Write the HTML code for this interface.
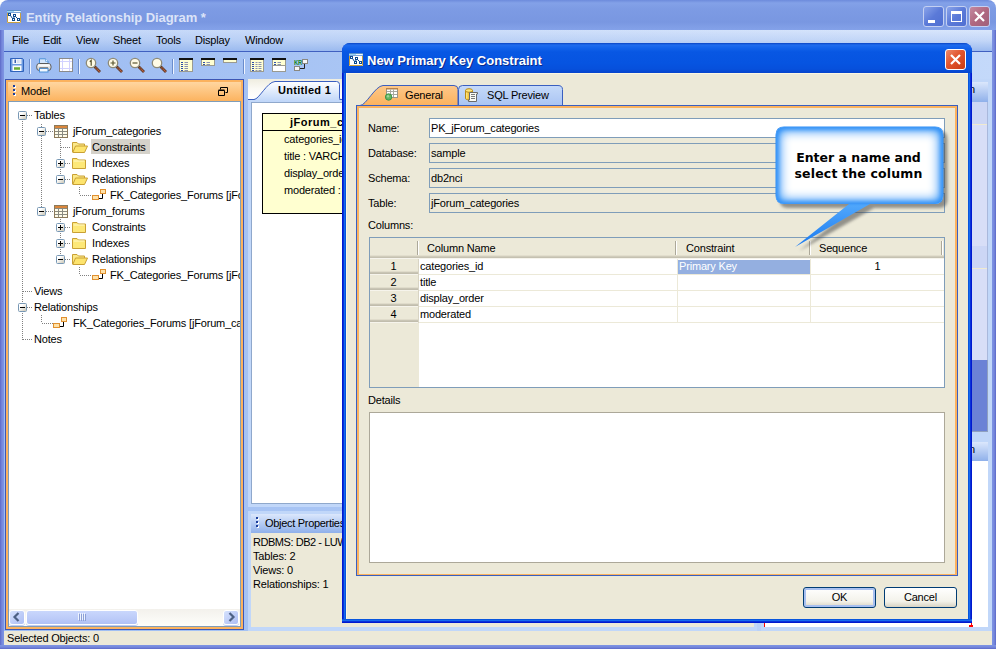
<!DOCTYPE html>
<html>
<head>
<meta charset="utf-8">
<title>Entity Relationship Diagram</title>
<style>
*{box-sizing:border-box;margin:0;padding:0}
html,body{width:996px;height:649px;overflow:hidden;background:#a9c5f4}
body{background:linear-gradient(90deg,#9dbcf2 0,#a9c5f4 35%,#c4d9fa 100%)}
body{position:relative;font-family:"Liberation Sans",sans-serif;font-size:11px;color:#000;line-height:14px;letter-spacing:-.18px}
div,span,svg{position:absolute}
.t{white-space:pre;line-height:14px;height:14px}
.b{font-weight:bold}
#wtitle{left:0;top:0;width:996px;height:30px;border-radius:8px 8px 0 0;background:linear-gradient(180deg,#6d8bdc 0,#83a1e8 3px,#7d9be4 9px,#7997e1 22px,#84a2e9 30px)}
.cap{letter-spacing:0;font-size:13px;font-weight:bold;line-height:16px;white-space:pre}
.wb{background:#7688dc}
#menubar{left:4px;top:30px;width:988px;height:21px;background:linear-gradient(180deg,rgba(155,186,239,0) 0,rgba(155,186,239,.35) 50%,rgba(155,186,239,1) 100%),linear-gradient(90deg,#c3d7f8,#d9e6fc)}
#toolbar{left:4px;top:52px;width:988px;height:27px}
.sep{width:2px;height:15px;top:59px;border-left:1px solid #6a8ccc;border-right:1px solid #eef4ff}
.face{background:#ece9d8}
.hl{height:1px;background-image:linear-gradient(90deg,#808080 50%,transparent 50%);background-size:2px 1px}
.vl{width:1px;background-image:linear-gradient(180deg,#808080 50%,transparent 50%);background-size:1px 2px}
.ex{width:9px;height:9px;border:1px solid #7898b5;border-radius:1.500px;background:linear-gradient(135deg,#fff 30%,#c9c5b4 100%)}
.ex i{position:absolute;left:1px;top:3px;width:5px;height:1px;background:#000}
.ex b{position:absolute;left:3px;top:1px;width:1px;height:5px;background:#000}
.fld{left:429px;width:516px;height:20px;border:1px solid #7f9db9;background:#ece9d8}
.fld span{left:1px;top:2px}
.btn{width:73px;height:21px;border:1px solid #003c74;border-radius:3px;background:linear-gradient(180deg,#fff 0,#f3f2ea 70%,#d8d3c3 100%);text-align:center;line-height:19px}
.cb{width:21px;height:21px;border:1px solid #fff;border-radius:3px}
</style>
</head>
<body>
<div class="" style="left:0px;top:0px;width:996px;height:10px;background:#fff"></div>
<div id="wtitle"></div>
<div class="" style="left:0px;top:30px;width:4px;height:619px;background:linear-gradient(90deg,#5a66c6 0,#6a7bd4 1px,#7688dc 2px,#7e95e4 4px)"></div>
<div class="" style="left:992px;top:30px;width:4px;height:619px;background:linear-gradient(270deg,#5a66c6 0,#6a7bd4 1px,#7688dc 2px,#7e95e4 4px)"></div>
<div class="" style="left:0px;top:645px;width:996px;height:4px;background:linear-gradient(0deg,#5a66c6 0,#6a7bd4 1px,#7688dc 2px,#7e95e4 4px)"></div>
<svg style="left:7px;top:10px" width="14" height="13" viewBox="0 0 14 13"><rect x="0" y="0" width="14" height="13" fill="#fff"/><rect x="0" y="0" width="14" height="1" fill="#5a90c8"/><rect x="0" y="1" width="14" height="1" fill="#9ad4f4"/><rect x="7" y="1" width="6.500" height="1" fill="#eef8fd"/><rect x="0" y="2" width="14" height="1" fill="#7aa6d8"/><path d="M.5 3V12.500H13.500V3" stroke="#c8a040" fill="none"/><path d="M3.500 5.500L5.500 8.500M8.500 6.500L10.500 8.500M7 7L6.500 9" stroke="#0a4a90" fill="none"/><g fill="#fff" stroke="#0a4a90"><rect x="1.500" y="3.500" width="2" height="2"/><rect x="6.500" y="4.500" width="2" height="2"/><rect x="5.500" y="8.500" width="2" height="2"/><rect x="10.500" y="8.500" width="2" height="2"/></g></svg>
<span class="cap" style="left:26px;top:10px;color:#dce4f8;letter-spacing:-.08px">Entity Relationship Diagram *</span>
<div class="cb" style="left:923px;top:6px;background:linear-gradient(135deg,#8aa4ea 0,#5b7ad8 50%,#4f6fd2 100%);border-color:#c4d0f2"><div style="left:4px;top:13px;width:7px;height:3px;background:#fff"></div></div>
<div class="cb" style="left:946px;top:6px;background:linear-gradient(135deg,#8aa4ea 0,#5b7ad8 50%,#4f6fd2 100%);border-color:#c4d0f2"><div style="left:4px;top:4px;width:11px;height:11px;border:1px solid #fff;border-top-width:3px"></div></div>
<div class="cb" style="left:969px;top:6px;background:linear-gradient(135deg,#c489a0 0,#b06880 50%,#a0607a 100%);border-color:#c4d0f2"><svg style="left:0;top:0" width="19" height="19"><path d="M5 5L14 14M14 5L5 14" stroke="#fff" stroke-width="2.2" fill="none"/></svg></div>
<div id="menubar"></div>
<span class="t " style="left:12px;top:33px;">File</span>
<span class="t " style="left:43px;top:33px;">Edit</span>
<span class="t " style="left:76px;top:33px;">View</span>
<span class="t " style="left:113px;top:33px;">Sheet</span>
<span class="t " style="left:156px;top:33px;">Tools</span>
<span class="t " style="left:195px;top:33px;">Display</span>
<span class="t " style="left:245px;top:33px;">Window</span>
<div class="" style="left:4px;top:51px;width:988px;height:1px;background:#4060c0"></div>
<div id="toolbar"></div>
<svg style="left:10px;top:58px" width="15" height="14" viewBox="0 0 15 14"><path d="M.5 .5H12.500L13.500 1.500V13.500H.5Z" fill="#6d9be0" stroke="#2f62bc"/><rect x="2.500" y="1" width="9" height="5" fill="#f4f7fc"/><rect x="4.500" y="1.500" width="1.500" height="3.500" fill="#3a62b0"/><rect x="7.500" y="1.500" width="1" height="3.500" fill="#c4cfe4"/><rect x="9.500" y="1.500" width="1" height="3.500" fill="#d4dcec"/><rect x="2.500" y="7.500" width="9" height="5.500" fill="#fbfcfe"/><rect x="4" y="9" width="6" height="3" fill="#8cc45a"/><rect x="4" y="10" width="6" height="1" fill="#6aa83c"/></svg>
<div class="sep" style="left:29px"></div>
<div class="sep" style="left:78px"></div>
<div class="sep" style="left:172px"></div>
<div class="sep" style="left:243px"></div>
<svg style="left:36px;top:58px" width="16" height="15" viewBox="0 0 16 15"><path d="M3.500 6V.8H9.500L12 3.300V6" fill="#d4e6fb" stroke="#4a90d8"/><path d="M9.500 .8V3.300H12" fill="#fff" stroke="#4a90d8" stroke-width=".7"/><rect x=".7" y="5.500" width="14.300" height="7" rx="2.800" fill="#dedede" stroke="#5a5a5a"/><rect x="1.800" y="6.300" width="12.200" height="2.200" rx="1.100" fill="#fafafa"/><rect x="3.500" y="10.500" width="8.500" height="3.500" fill="#f2f8fe" stroke="#4a90d8"/><rect x="3.500" y="9" width="8.500" height="1.200" fill="#8a8a8a"/></svg>
<svg style="left:59px;top:58px" width="14" height="14" viewBox="0 0 14 14"><rect x=".5" y=".5" width="13" height="13" fill="#fff" stroke="#8a8a8a"/><path d="M1 3.500H13M1 10.500H13M3.500 1V13M10.500 1V13" stroke="#d2d2ff" fill="none"/></svg>
<svg style="left:85px;top:57px" width="17" height="17" viewBox="0 0 17 17"><path d="M9.500 9.500L15 15" stroke="#5a3a2a" stroke-width="2.800"/><path d="M10.500 10.500L14.800 14.800" stroke="#c0603a" stroke-width="1.400" stroke-dasharray="1.200 .6"/><circle cx="6" cy="6" r="4.700" fill="#fffbe6" stroke="#8d8a78" stroke-width="1.300"/><path d="M4.800 4.800L6.200 3.500V8.800" stroke="#5a5630" stroke-width="1.200" fill="none"/></svg>
<svg style="left:107px;top:57px" width="17" height="17" viewBox="0 0 17 17"><path d="M9.500 9.500L15 15" stroke="#5a3a2a" stroke-width="2.800"/><path d="M10.500 10.500L14.800 14.800" stroke="#c0603a" stroke-width="1.400" stroke-dasharray="1.200 .6"/><circle cx="6" cy="6" r="4.700" fill="#fffbe6" stroke="#8d8a78" stroke-width="1.300"/><path d="M3.500 6H8.500M6 3.500V8.500" stroke="#5a5630" stroke-width="1.200" fill="none"/></svg>
<svg style="left:129px;top:57px" width="17" height="17" viewBox="0 0 17 17"><path d="M9.500 9.500L15 15" stroke="#5a3a2a" stroke-width="2.800"/><path d="M10.500 10.500L14.800 14.800" stroke="#c0603a" stroke-width="1.400" stroke-dasharray="1.200 .6"/><circle cx="6" cy="6" r="4.700" fill="#fffbe6" stroke="#8d8a78" stroke-width="1.300"/><path d="M3.500 6H8.500" stroke="#5a5630" stroke-width="1.200" fill="none"/></svg>
<svg style="left:151px;top:57px" width="17" height="17" viewBox="0 0 17 17"><path d="M9.500 9.500L15 15" stroke="#5a3a2a" stroke-width="2.800"/><path d="M10.500 10.500L14.800 14.800" stroke="#c0603a" stroke-width="1.400" stroke-dasharray="1.200 .6"/><circle cx="6" cy="6" r="4.700" fill="#fffbe6" stroke="#8d8a78" stroke-width="1.300"/></svg>
<svg style="left:179px;top:58px" width="14" height="14" viewBox="0 0 14 14"><rect x=".5" y="1.500" width="13" height="12" fill="#ffffd2" stroke="#9a9a90"/><rect x="0" y="0" width="14" height="2" fill="#111"/><path d="M2 4.5H4" stroke="#2d4fa8"/><path d="M5.500 4.5H9" stroke="#8a93b0"/><path d="M2 6.5H4" stroke="#2d4fa8"/><path d="M5.500 6.5H9" stroke="#8a93b0"/><path d="M2 8.5H4" stroke="#2d4fa8"/><path d="M5.500 8.5H9" stroke="#8a93b0"/><path d="M2 10.5H4" stroke="#2d4fa8"/><path d="M5.500 10.5H9" stroke="#8a93b0"/><path d="M2 12.5H4" stroke="#2d4fa8"/><path d="M5.500 12.5H9" stroke="#8a93b0"/></svg>
<svg style="left:201px;top:58px" width="14" height="8" viewBox="0 0 14 8"><rect x=".5" y="1.500" width="13" height="6" fill="#ffffd2" stroke="#9a9a90"/><rect x="0" y="0" width="14" height="2" fill="#111"/><path d="M2 4.5H4" stroke="#2d4fa8"/><path d="M5.500 4.5H9" stroke="#8a93b0"/><path d="M2 6.5H4" stroke="#2d4fa8"/><path d="M5.500 6.5H9" stroke="#8a93b0"/></svg>
<svg style="left:223px;top:58px" width="14" height="5" viewBox="0 0 14 5"><rect x=".5" y="1.500" width="13" height="3" fill="#ffffd2" stroke="#9a9a90"/><rect x="0" y="0" width="14" height="2" fill="#111"/></svg>
<svg style="left:250px;top:58px" width="14" height="14" viewBox="0 0 14 14"><rect x=".5" y="1.500" width="13" height="12" fill="#ffffd2" stroke="#9a9a90"/><rect x="0" y="0" width="14" height="2" fill="#111"/><path d="M2 4.5H4" stroke="#2d4fa8"/><path d="M5.500 4.5H7.5" stroke="#8a93b0"/><path d="M8.500 4.5H11.500" stroke="#8a93b0"/><path d="M2 6.5H4" stroke="#2d4fa8"/><path d="M5.500 6.5H7.5" stroke="#8a93b0"/><path d="M8.500 6.5H11.500" stroke="#8a93b0"/><path d="M2 8.5H4" stroke="#2d4fa8"/><path d="M5.500 8.5H7.5" stroke="#8a93b0"/><path d="M8.500 8.5H11.500" stroke="#8a93b0"/><path d="M2 10.5H4" stroke="#2d4fa8"/><path d="M5.500 10.5H7.5" stroke="#8a93b0"/><path d="M8.500 10.5H11.500" stroke="#8a93b0"/><path d="M2 12.5H4" stroke="#2d4fa8"/><path d="M5.500 12.5H7.5" stroke="#8a93b0"/><path d="M8.500 12.5H11.500" stroke="#8a93b0"/></svg>
<svg style="left:272px;top:58px" width="14" height="14" viewBox="0 0 14 14"><rect x=".5" y="1.500" width="13" height="12" fill="#ffffd2" stroke="#9a9a90"/><rect x="0" y="0" width="14" height="2" fill="#111"/><rect x="1" y="8" width="12" height="5" fill="#fff"/><path d="M.5 7.500H13.500" stroke="#9a9a90"/><path d="M2 4.5H4" stroke="#2d4fa8"/><path d="M5.500 4.5H9" stroke="#8a93b0"/><path d="M2 6.5H4" stroke="#2d4fa8"/><path d="M5.500 6.5H9" stroke="#8a93b0"/></svg>
<svg style="left:294px;top:59px" width="15" height="12" viewBox="0 0 15 12"><path d="M6 9.500H10.500V4.500" stroke="#222" fill="none"/><rect x="8.500" y=".5" width="5" height="4" fill="#f6f6f6" stroke="#8a8880"/><rect x=".5" y="7.500" width="5" height="4" fill="#f6f6f6" stroke="#8a8880"/><text x="0" y="6" font-family="Liberation Sans,sans-serif" font-size="6.500" font-weight="bold" fill="#1e8a1e" textLength="8" lengthAdjust="spacingAndGlyphs">KR</text></svg>
<div class="face" style="left:4px;top:631px;width:988px;height:14px;"></div>
<span class="t " style="left:7px;top:631px;">Selected Objects: 0</span>
<div class="" style="left:5px;top:79px;width:239px;height:551px;background:#fbb25e;border:1px solid #3d56b4"></div>
<div class="" style="left:8px;top:82px;width:233px;height:19px;background:linear-gradient(180deg,#ffd6a0 0,#fcb35f 100%)"></div>
<div class="" style="left:14px;top:86px;width:2px;height:2px;background:#fff"></div>
<div class="" style="left:13px;top:85px;width:2px;height:2px;background:#1c3f9c"></div>
<div class="" style="left:14px;top:90px;width:2px;height:2px;background:#fff"></div>
<div class="" style="left:13px;top:89px;width:2px;height:2px;background:#1c3f9c"></div>
<div class="" style="left:14px;top:94px;width:2px;height:2px;background:#fff"></div>
<div class="" style="left:13px;top:93px;width:2px;height:2px;background:#1c3f9c"></div>
<span class="t " style="left:21px;top:84px;">Model</span>
<svg style="left:218px;top:87px" width="10" height="9"><path d="M2.500 2.500V.5H9.500V5.500H7.500M.5 3.500H6.500V8.500H.5Z" fill="none" stroke="#000"/><path d="M.5 3H6.500" stroke="#000"/></svg>
<div class="" style="left:8px;top:101px;width:233px;height:526px;background:#fff;border:1px solid #7f9db9"></div>
<div style="left:8px;top:101px;width:232px;height:508px;overflow:hidden">
<span class="t" style="left:26px;top:7px">Tables</span>
<span class="t" style="left:65px;top:23px">jForum_categories</span>
<div style="left:83px;top:38px;width:59px;height:15px;background:#d5d2ca"></div>
<span class="t" style="left:84px;top:39px">Constraints</span>
<span class="t" style="left:84px;top:55px">Indexes</span>
<span class="t" style="left:84px;top:71px">Relationships</span>
<span class="t" style="left:102px;top:87px">FK_Categories_Forums [jForum_categories.categories_id]</span>
<span class="t" style="left:65px;top:103px">jForum_forums</span>
<span class="t" style="left:84px;top:119px">Constraints</span>
<span class="t" style="left:84px;top:135px">Indexes</span>
<span class="t" style="left:84px;top:151px">Relationships</span>
<span class="t" style="left:102px;top:167px">FK_Categories_Forums [jForum_categories.categories_id]</span>
<span class="t" style="left:26px;top:183px">Views</span>
<span class="t" style="left:26px;top:199px">Relationships</span>
<span class="t" style="left:65px;top:215px">FK_Categories_Forums [jForum_categories.categories_id]</span>
<span class="t" style="left:26px;top:231px">Notes</span>
</div>
<div class="vl" style="left:22px;top:121px;width:1px;height:219px;"></div>
<div class="hl" style="left:27px;top:115px;width:6px;height:1px;"></div>
<div class="hl" style="left:23px;top:291px;width:10px;height:1px;"></div>
<div class="hl" style="left:27px;top:307px;width:6px;height:1px;"></div>
<div class="hl" style="left:23px;top:339px;width:10px;height:1px;"></div>
<div class="vl" style="left:41px;top:124px;width:1px;height:83px;"></div>
<div class="hl" style="left:46px;top:131px;width:7px;height:1px;"></div>
<div class="hl" style="left:46px;top:211px;width:7px;height:1px;"></div>
<div class="vl" style="left:60px;top:139px;width:1px;height:36px;"></div>
<div class="hl" style="left:61px;top:147px;width:10px;height:1px;"></div>
<div class="hl" style="left:65px;top:163px;width:6px;height:1px;"></div>
<div class="hl" style="left:65px;top:179px;width:6px;height:1px;"></div>
<div class="vl" style="left:79px;top:187px;width:1px;height:8px;"></div>
<div class="hl" style="left:80px;top:195px;width:11px;height:1px;"></div>
<div class="vl" style="left:60px;top:219px;width:1px;height:36px;"></div>
<div class="hl" style="left:65px;top:227px;width:6px;height:1px;"></div>
<div class="hl" style="left:65px;top:243px;width:6px;height:1px;"></div>
<div class="hl" style="left:65px;top:259px;width:6px;height:1px;"></div>
<div class="vl" style="left:79px;top:267px;width:1px;height:8px;"></div>
<div class="hl" style="left:80px;top:275px;width:11px;height:1px;"></div>
<div class="vl" style="left:41px;top:315px;width:1px;height:8px;"></div>
<div class="hl" style="left:42px;top:323px;width:11px;height:1px;"></div>
<div class="ex" style="left:18px;top:111px"><i></i></div>
<div class="ex" style="left:37px;top:127px"><i></i></div>
<div class="ex" style="left:56px;top:159px"><i></i><b></b></div>
<div class="ex" style="left:56px;top:175px"><i></i></div>
<div class="ex" style="left:37px;top:207px"><i></i></div>
<div class="ex" style="left:56px;top:223px"><i></i><b></b></div>
<div class="ex" style="left:56px;top:239px"><i></i><b></b></div>
<div class="ex" style="left:56px;top:255px"><i></i></div>
<div class="ex" style="left:18px;top:303px"><i></i></div>
<svg style="left:54px;top:125px" width="14" height="13" viewBox="0 0 14 13"><rect x=".5" y=".5" width="13" height="12" fill="#fffbe8" stroke="#8c7a5a"/><rect x="1" y="1" width="12" height="2.500" fill="#d9853b"/><path d="M1 3.500H13M1 6.500H13M1 9.500H13M4.500 3V12M8.500 3V12" stroke="#8a8a80" fill="none"/></svg>
<svg style="left:54px;top:205px" width="14" height="13" viewBox="0 0 14 13"><rect x=".5" y=".5" width="13" height="12" fill="#fffbe8" stroke="#8c7a5a"/><rect x="1" y="1" width="12" height="2.500" fill="#d9853b"/><path d="M1 3.500H13M1 6.500H13M1 9.500H13M4.500 3V12M8.500 3V12" stroke="#8a8a80" fill="none"/></svg>
<svg style="left:72px;top:141px" width="16" height="12" viewBox="0 0 16 12"><path d="M.5 11V1.500H5L6.500 3H12.500V5" fill="#fbe98a" stroke="#c9a034"/><path d="M.8 11.500L3.500 5H15.500L12.500 11.500Z" fill="#fde46e" stroke="#c9a034"/></svg>
<svg style="left:72px;top:157px" width="15" height="12" viewBox="0 0 15 12"><path d="M.5 11.500V1.500H5L6.500 3H13.500V11.500Z" fill="#fde878" stroke="#c9a034"/><path d="M1.500 4H12.500" stroke="#fff8c8"/></svg>
<svg style="left:72px;top:173px" width="16" height="12" viewBox="0 0 16 12"><path d="M.5 11V1.500H5L6.500 3H12.500V5" fill="#fbe98a" stroke="#c9a034"/><path d="M.8 11.500L3.500 5H15.500L12.500 11.500Z" fill="#fde46e" stroke="#c9a034"/></svg>
<svg style="left:72px;top:221px" width="15" height="12" viewBox="0 0 15 12"><path d="M.5 11.500V1.500H5L6.500 3H13.500V11.500Z" fill="#fde878" stroke="#c9a034"/><path d="M1.500 4H12.500" stroke="#fff8c8"/></svg>
<svg style="left:72px;top:237px" width="15" height="12" viewBox="0 0 15 12"><path d="M.5 11.500V1.500H5L6.500 3H13.500V11.500Z" fill="#fde878" stroke="#c9a034"/><path d="M1.500 4H12.500" stroke="#fff8c8"/></svg>
<svg style="left:72px;top:253px" width="16" height="12" viewBox="0 0 16 12"><path d="M.5 11V1.500H5L6.500 3H12.500V5" fill="#fbe98a" stroke="#c9a034"/><path d="M.8 11.500L3.500 5H15.500L12.500 11.500Z" fill="#fde46e" stroke="#c9a034"/></svg>
<svg style="left:92px;top:189px" width="15" height="12" viewBox="0 0 15 12"><path d="M7 9.500H10.500V4" stroke="#000" fill="none"/><rect x="8.500" y=".5" width="5" height="4" fill="#ffe2a8" stroke="#e09030"/><rect x=".5" y="6.500" width="6" height="4" fill="#ffe2a8" stroke="#e09030"/></svg>
<svg style="left:92px;top:269px" width="15" height="12" viewBox="0 0 15 12"><path d="M7 9.500H10.500V4" stroke="#000" fill="none"/><rect x="8.500" y=".5" width="5" height="4" fill="#ffe2a8" stroke="#e09030"/><rect x=".5" y="6.500" width="6" height="4" fill="#ffe2a8" stroke="#e09030"/></svg>
<svg style="left:53px;top:317px" width="15" height="12" viewBox="0 0 15 12"><path d="M7 9.500H10.500V4" stroke="#000" fill="none"/><rect x="8.500" y=".5" width="5" height="4" fill="#ffe2a8" stroke="#e09030"/><rect x=".5" y="6.500" width="6" height="4" fill="#ffe2a8" stroke="#e09030"/></svg>
<div class="" style="left:9px;top:609px;width:231px;height:17px;background:linear-gradient(180deg,#f3f1ec 0,#fefefb 100%)"></div>
<div style="left:9px;top:610px;width:16px;height:15px;border:1px solid #fff;border-radius:3px;background:linear-gradient(135deg,#d6e2fd 0,#bccbf7 60%,#aebff5 100%);box-shadow:0 1px 0 #c0cdf0"><svg style="left:-1px;top:-1px" width="16" height="15"><path d="M9.500 3L5.500 7L9.500 11" stroke="#4d6185" stroke-width="2.200" fill="none"/></svg></div>
<div style="left:223px;top:610px;width:16px;height:15px;border:1px solid #fff;border-radius:3px;background:linear-gradient(135deg,#d6e2fd 0,#bccbf7 60%,#aebff5 100%);box-shadow:0 1px 0 #c0cdf0"><svg style="left:-1px;top:-1px" width="16" height="15"><path d="M6.500 3L10.500 7L6.500 11" stroke="#4d6185" stroke-width="2.200" fill="none"/></svg></div>
<div class="" style="left:26px;top:610px;width:112px;height:15px;border:1px solid #fff;border-radius:3px;background:linear-gradient(180deg,#c9d7fc 0,#bccbf8 60%,#b0c1f5 100%);box-shadow:0 1px 0 #c0cdf0"></div>
<div class="" style="left:78px;top:613px;width:1px;height:7px;background:#eef4fe"></div>
<div class="" style="left:80px;top:613px;width:1px;height:7px;background:#eef4fe"></div>
<div class="" style="left:82px;top:613px;width:1px;height:7px;background:#eef4fe"></div>
<div class="" style="left:84px;top:613px;width:1px;height:7px;background:#eef4fe"></div>
<div class="" style="left:79px;top:614px;width:1px;height:7px;background:#8c9fd6"></div>
<div class="" style="left:81px;top:614px;width:1px;height:7px;background:#8c9fd6"></div>
<div class="" style="left:83px;top:614px;width:1px;height:7px;background:#8c9fd6"></div>
<div class="" style="left:85px;top:614px;width:1px;height:7px;background:#8c9fd6"></div>
<div class="" style="left:248px;top:79px;width:744px;height:428px;background:#c1d7f9"></div>
<div class="" style="left:248px;top:511px;width:509px;height:120px;background:#c1d7f9"></div>
<div class="" style="left:761px;top:439px;width:231px;height:192px;background:#c1d7f9"></div>
<div class="" style="left:965px;top:79px;width:27px;height:363px;background:#c1d7f9"></div>
<div class="" style="left:248px;top:79px;width:715px;height:20px;background:linear-gradient(180deg,#efede0 0,#fbfaf5 50%,#fff 100%)"></div>
<div class="" style="left:248px;top:99px;width:715px;height:1px;background:#3a5fc0"></div>
<svg style="left:250px;top:79px" width="92" height="24"><defs><linearGradient id="dtg" x1="0" y1="0" x2="0" y2="1"><stop offset="0" stop-color="#fff"/><stop offset="1" stop-color="#c1d7f9"/></linearGradient></defs><path d="M0 20.500H4C9 20.500 17 3 25 2.500H86.500Q89.500 2.500 89.500 5.500V22H0Z" fill="url(#dtg)" stroke="none"/><path d="M0 20.500H4C9 20.500 17 3 25 2.500H86.500Q89.500 2.500 89.500 5.500V19.500Q89.500 20.500 92 20.500" fill="none" stroke="#3a5fc0"/></svg>
<span class="t b" style="left:278px;top:83px;letter-spacing:.3px">Untitled 1</span>
<div class="" style="left:251px;top:102px;width:710px;height:402px;background:#fff;border:1px solid #8fa8cc"></div>
<div class="" style="left:262px;top:113px;width:120px;height:101px;background:#ffffd0;border:1px solid #000"></div>
<div class="" style="left:262px;top:130px;width:120px;height:1px;background:#000"></div>
<span class="t b" style="left:290px;top:115px;letter-spacing:.5px">jForum_categories</span>
<span class="t " style="left:284px;top:132px;">categories_id : INTEGER</span>
<span class="t " style="left:284px;top:149px;">title : VARCHAR(100)</span>
<span class="t " style="left:284px;top:166px;">display_order : INTEGER</span>
<span class="t " style="left:284px;top:183px;">moderated : INTEGER</span>
<div class="" style="left:251px;top:514px;width:503px;height:19px;background:linear-gradient(180deg,#dbe7fc 0,#8fb0ea 100%)"></div>
<div class="" style="left:257px;top:518px;width:2px;height:2px;background:#fff"></div>
<div class="" style="left:256px;top:517px;width:2px;height:2px;background:#1c3f9c"></div>
<div class="" style="left:257px;top:522px;width:2px;height:2px;background:#fff"></div>
<div class="" style="left:256px;top:521px;width:2px;height:2px;background:#1c3f9c"></div>
<div class="" style="left:257px;top:526px;width:2px;height:2px;background:#fff"></div>
<div class="" style="left:256px;top:525px;width:2px;height:2px;background:#1c3f9c"></div>
<span class="t " style="left:265px;top:516px;letter-spacing:-.3px">Object Properties</span>
<div class="face" style="left:251px;top:533px;width:503px;height:94px;"></div>
<span class="t " style="left:253px;top:535px;letter-spacing:-.45px">RDBMS: DB2 - LUW</span>
<span class="t " style="left:253px;top:549px;">Tables: 2</span>
<span class="t " style="left:253px;top:563px;">Views: 0</span>
<span class="t " style="left:253px;top:577px;">Relationships: 1</span>
<div class="" style="left:764px;top:461px;width:224px;height:166px;background:#fff"></div>
<div class="" style="left:764px;top:623px;width:1px;height:4px;background:#f00"></div>
<div class="" style="left:971px;top:623px;width:1px;height:2px;background:#f00"></div>
<div class="" style="left:969px;top:625px;width:4px;height:2px;background:#f00"></div>
<div class="" style="left:972px;top:82px;width:16px;height:20px;background:linear-gradient(180deg,#dbe7fc 0,#8fb0ea 100%)"></div>
<span class="t " style="left:963px;top:82px;">on</span>
<div class="" style="left:972px;top:102px;width:16px;height:258px;background:#d8def7;border-right:1px solid #a9b8dc"></div>
<div class="" style="left:972px;top:102px;width:15px;height:22px;background:#ccd6f5"></div>
<div class="" style="left:972px;top:124px;width:15px;height:1px;background:#f0ead0"></div>
<div class="" style="left:972px;top:246px;width:15px;height:22px;background:#ccd6f5"></div>
<div class="" style="left:972px;top:268px;width:15px;height:1px;background:#f0ead0"></div>
<div class="" style="left:972px;top:360px;width:16px;height:72px;background:#6b82d6;border-right:1px solid #8fa0c0;border-bottom:1px solid #8fa0c0"></div>
<div class="" style="left:972px;top:442px;width:16px;height:19px;background:linear-gradient(180deg,#dbe7fc 0,#8fb0ea 100%)"></div>
<span class="t " style="left:963px;top:442px;">on</span>
<div style="left:342px;top:43px;width:630px;height:580px;border-radius:8px 8px 0 0;background:linear-gradient(90deg,#0019cf 0,#0019cf 1px,#0831d9 1px,#0831d9 2px,#166aee 2px,#166aee 3px,#0855dd 3px,#0855dd 627px,#166aee 627px,#166aee 628px,#0831d9 628px,#0831d9 629px,#0019cf 629px);overflow:hidden">
<div style="left:0;top:576px;width:630px;height:4px;background:linear-gradient(180deg,#0855dd 0,#0855dd 1px,#166aee 1px,#166aee 2px,#0831d9 2px,#0831d9 3px,#0019cf 3px)"></div>
<div style="left:0;top:0;width:630px;height:30px;background:linear-gradient(180deg,#0a44c4 0,#1f6cee 2px,#1262ea 5px,#0857e3 9px,#0654e1 20px,#0650dc 26px,#0644cc 30px)"></div>
<div style="left:4px;top:30px;width:622px;height:546px;background:#ece9d8;border-left:1px solid #fbf6e2;border-top:1px solid #fbf6e2"></div>
</div>
<svg style="left:349px;top:53px" width="14" height="13" viewBox="0 0 14 13"><rect x="0" y="0" width="14" height="13" fill="#fff"/><rect x="0" y="0" width="14" height="1" fill="#5a90c8"/><rect x="0" y="1" width="14" height="1" fill="#9ad4f4"/><rect x="7" y="1" width="6.500" height="1" fill="#eef8fd"/><rect x="0" y="2" width="14" height="1" fill="#7aa6d8"/><path d="M.5 3V12.500H13.500V3" stroke="#c8a040" fill="none"/><path d="M3.500 5.500L5.500 8.500M8.500 6.500L10.500 8.500M7 7L6.500 9" stroke="#0a4a90" fill="none"/><g fill="#fff" stroke="#0a4a90"><rect x="1.500" y="3.500" width="2" height="2"/><rect x="6.500" y="4.500" width="2" height="2"/><rect x="5.500" y="8.500" width="2" height="2"/><rect x="10.500" y="8.500" width="2" height="2"/></g></svg>
<span class="cap" style="left:367px;top:53px;color:#fff;text-shadow:1px 1px 0 #0a2a8c">New Primary Key Constraint</span>
<div class="cb" style="left:945px;top:49px;background:linear-gradient(135deg,#ec8a6c 0,#e2552e 45%,#c83a14 100%);border-color:#fff"><svg style="left:0;top:0" width="19" height="19"><path d="M5 5L14 14M14 5L5 14" stroke="#fff" stroke-width="2.2" fill="none"/></svg></div>
<svg style="left:358px;top:83px" width="210" height="24"><defs><linearGradient id="tgo" x1="0" y1="0" x2="0" y2="1"><stop offset="0" stop-color="#fdc88a"/><stop offset="1" stop-color="#fbb05a"/></linearGradient><linearGradient id="tgb" x1="0" y1="0" x2="0" y2="1"><stop offset="0" stop-color="#c6daf9"/><stop offset="1" stop-color="#a9c4f3"/></linearGradient></defs><path d="M2 22.500C8 22.500 17 3 25 2.500H96Q100 2.500 100 6.500V24H2Z" fill="url(#tgo)"/><path d="M2 22.500C8 22.500 17 3 25 2.500H96Q100 2.500 100 6.500V22.500" fill="none" stroke="#3a5fc0"/><path d="M100.500 22.500V6.500Q100.500 2.500 104.500 2.500H200Q204.500 2.500 204.500 6.500V22.500Z" fill="url(#tgb)" stroke="#3a5fc0"/></svg>
<svg style="left:385px;top:88px" width="14" height="13" viewBox="0 0 14 13"><rect x="1.500" y=".5" width="11" height="9" fill="#fff" stroke="#9a9488"/><rect x="1" y="0" width="12" height="1.500" fill="#b8834a"/><path d="M2 3.500H12M2 6.500H12M5.500 1.500V9M8.500 1.500V9" stroke="#a8a8a0" fill="none"/><circle cx="3.600" cy="9" r="3.200" fill="#62b462" stroke="#3f9448"/><circle cx="3" cy="8.300" r="1.200" fill="#9ad49a"/></svg>
<svg style="left:465px;top:88px" width="14" height="14" viewBox="0 0 14 14"><path d="M.5 2.500V10.500C.5 12.300 7.500 12.300 7.500 10.500V2.500" fill="#f3c53a" stroke="#b98a14"/><ellipse cx="4" cy="2.500" rx="3.500" ry="1.800" fill="#fde47a" stroke="#b98a14"/><path d="M1.800 4.500V10.500" stroke="#fdeea0"/><path d="M4.500 4.500H12.500V6H11.500V13.500H3.500V12H4.500Z" fill="#fbfbf4" stroke="#6a6a6a"/><path d="M6 6.500H10M6 8.500H10M6 10.500H10" stroke="#7a7a7a" fill="none"/></svg>
<span class="t " style="left:405px;top:88px;">General</span>
<span class="t " style="left:487px;top:88px;">SQL Preview</span>
<div class="" style="left:356px;top:105px;width:602px;height:471px;background:#ece9d8;border:1px solid #3a5fc0"></div>
<div class="" style="left:357px;top:106px;width:600px;height:469px;border:2px solid #fbb25e;border-bottom-width:1px;border-right-width:2px"></div>
<span class="t " style="left:368px;top:121px;">Name:</span>
<div class="fld" style="top:118px;background:#fff"><span class="t">PK_jForum_categories</span></div>
<span class="t " style="left:368px;top:146px;">Database:</span>
<div class="fld" style="top:143px;"><span class="t">sample</span></div>
<span class="t " style="left:368px;top:171px;">Schema:</span>
<div class="fld" style="top:168px;"><span class="t">db2nci</span></div>
<span class="t " style="left:368px;top:196px;">Table:</span>
<div class="fld" style="top:193px;"><span class="t">jForum_categories</span></div>
<span class="t " style="left:368px;top:218px;">Columns:</span>
<div class="" style="left:369px;top:237px;width:576px;height:151px;background:#fff;border:1px solid #7f9db9"></div>
<div class="" style="left:370px;top:238px;width:574px;height:21px;background:linear-gradient(180deg,#ece9d8 0,#ece9d8 17px,#e2decd 17px,#e2decd 18px,#d0ccbb 18px,#d0ccbb 19px,#c5c1b1 19px,#c5c1b1 20px,#f6f4ec 20px)"></div>
<div class="" style="left:370px;top:259px;width:49px;height:128px;background:#ece9d8"></div>
<div class="" style="left:370px;top:259px;width:49px;height:16px;background:linear-gradient(180deg,#ece9d8 0,#ece9d8 12px,#e0dccb 12px,#e0dccb 13px,#c9c5b5 13px,#c9c5b5 14px,#c1bdad 14px,#c1bdad 15px,#f6f4ec 15px);border-right:1px solid #d8d4c4"></div>
<span class="t " style="left:370px;top:259px;width:47px;text-align:center">1</span>
<div class="" style="left:419px;top:274px;width:525px;height:1px;background:#ece9d8"></div>
<span class="t " style="left:420px;top:259px;">categories_id</span>
<div class="" style="left:370px;top:275px;width:49px;height:16px;background:linear-gradient(180deg,#ece9d8 0,#ece9d8 12px,#e0dccb 12px,#e0dccb 13px,#c9c5b5 13px,#c9c5b5 14px,#c1bdad 14px,#c1bdad 15px,#f6f4ec 15px);border-right:1px solid #d8d4c4"></div>
<span class="t " style="left:370px;top:275px;width:47px;text-align:center">2</span>
<div class="" style="left:419px;top:290px;width:525px;height:1px;background:#ece9d8"></div>
<span class="t " style="left:420px;top:275px;">title</span>
<div class="" style="left:370px;top:291px;width:49px;height:16px;background:linear-gradient(180deg,#ece9d8 0,#ece9d8 12px,#e0dccb 12px,#e0dccb 13px,#c9c5b5 13px,#c9c5b5 14px,#c1bdad 14px,#c1bdad 15px,#f6f4ec 15px);border-right:1px solid #d8d4c4"></div>
<span class="t " style="left:370px;top:291px;width:47px;text-align:center">3</span>
<div class="" style="left:419px;top:306px;width:525px;height:1px;background:#ece9d8"></div>
<span class="t " style="left:420px;top:291px;">display_order</span>
<div class="" style="left:370px;top:307px;width:49px;height:16px;background:linear-gradient(180deg,#ece9d8 0,#ece9d8 12px,#e0dccb 12px,#e0dccb 13px,#c9c5b5 13px,#c9c5b5 14px,#c1bdad 14px,#c1bdad 15px,#f6f4ec 15px);border-right:1px solid #d8d4c4"></div>
<span class="t " style="left:370px;top:307px;width:47px;text-align:center">4</span>
<div class="" style="left:419px;top:322px;width:525px;height:1px;background:#ece9d8"></div>
<span class="t " style="left:420px;top:307px;">moderated</span>
<div class="" style="left:677px;top:259px;width:1px;height:64px;background:#ece9d8"></div>
<div class="" style="left:810px;top:259px;width:1px;height:64px;background:#ece9d8"></div>
<div class="" style="left:417px;top:241px;width:1px;height:14px;background:#aca899"></div>
<div class="" style="left:418px;top:241px;width:1px;height:14px;background:#fff"></div>
<div class="" style="left:675px;top:241px;width:1px;height:14px;background:#aca899"></div>
<div class="" style="left:676px;top:241px;width:1px;height:14px;background:#fff"></div>
<div class="" style="left:809px;top:241px;width:1px;height:14px;background:#aca899"></div>
<div class="" style="left:810px;top:241px;width:1px;height:14px;background:#fff"></div>
<div class="" style="left:941px;top:241px;width:1px;height:14px;background:#aca899"></div>
<div class="" style="left:942px;top:241px;width:1px;height:14px;background:#fff"></div>
<span class="t " style="left:427px;top:241px;">Column Name</span>
<span class="t " style="left:686px;top:241px;">Constraint</span>
<span class="t " style="left:819px;top:241px;">Sequence</span>
<div class="" style="left:678px;top:260px;width:132px;height:14px;background:#94afe0"></div>
<span class="t " style="left:679px;top:259px;color:#fff">Primary Key</span>
<span class="t " style="left:811px;top:259px;width:133px;text-align:center">1</span>
<span class="t " style="left:368px;top:393px;">Details</span>
<div class="" style="left:369px;top:412px;width:576px;height:151px;background:#fff;border:1px solid #aca899"></div>
<div class="btn" style="left:803px;top:587px;box-shadow:inset 0 0 0 2px #a8c0f0">OK</div>
<div class="btn" style="left:884px;top:587px">Cancel</div>
<svg style="left:760px;top:115px" width="200" height="145" viewBox="760 115 200 145">
<defs><filter id="sh" x="-20%" y="-20%" width="150%" height="150%"><feGaussianBlur stdDeviation="1.800"/></filter>
<radialGradient id="cg" cx="50%" cy="50%" r="50%"><stop offset="0" stop-color="#fff"/><stop offset=".55" stop-color="#fff"/><stop offset="1" stop-color="#2f8ef5"/></radialGradient>
<linearGradient id="tg" gradientUnits="userSpaceOnUse" x1="0" y1="126" x2="0" y2="247"><stop offset="0" stop-color="#2f8ef5"/><stop offset=".62" stop-color="#2f8ef5"/><stop offset=".66" stop-color="#4fa6fb"/><stop offset="1" stop-color="#1a7af0"/></linearGradient></defs>
<path d="M784 126.500H935Q943.500 126.500 943.500 135V195.500Q943.500 204 935 204H870L795 247L849 204H784Q775.500 204 775.500 195.500V135Q775.500 126.500 784 126.500Z" transform="translate(4,4)" fill="#4a4a4a" opacity=".55" filter="url(#sh)"/>
<path d="M784 126.500H935Q943.500 126.500 943.500 135V195.500Q943.500 204 935 204H870L795 247L849 204H784Q775.500 204 775.500 195.500V135Q775.500 126.500 784 126.500Z" fill="url(#tg)"/>
</svg>
<div class="" style="left:776px;top:127px;width:167px;height:77px;border-radius:8px;background:#fff;box-shadow:inset 0 0 11px 4px #3393f7, inset 0 0 4px 2px #2a8cf5"></div>
<span class="t b" style="left:775px;top:150px;width:167px;text-align:center;font-family:'DejaVu Sans','Liberation Sans',sans-serif;font-size:12.500px;letter-spacing:0;line-height:16px;height:16px">Enter a name and</span>
<span class="t b" style="left:775px;top:166px;width:167px;text-align:center;font-family:'DejaVu Sans','Liberation Sans',sans-serif;font-size:12.500px;letter-spacing:.17px;line-height:16px;height:16px">select the column</span>
</body>
</html>
